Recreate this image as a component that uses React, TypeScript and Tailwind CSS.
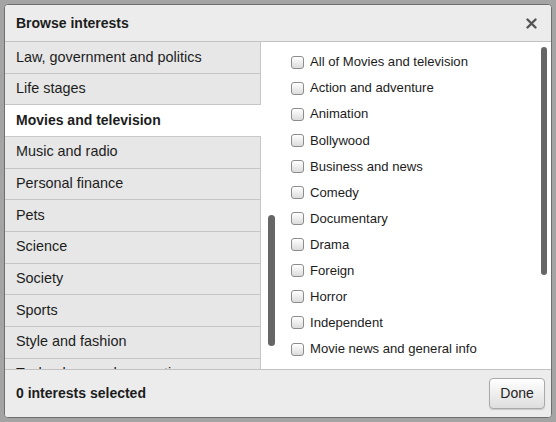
const categories = [
  "Law, government and politics",
  "Life stages",
  "Movies and television",
  "Music and radio",
  "Personal finance",
  "Pets",
  "Science",
  "Society",
  "Sports",
  "Style and fashion",
  "Technology and computing",
];

const subcategories = [
  "All of Movies and television",
  "Action and adventure",
  "Animation",
  "Bollywood",
  "Business and news",
  "Comedy",
  "Documentary",
  "Drama",
  "Foreign",
  "Horror",
  "Independent",
  "Movie news and general info",
  "Reality TV",
];

const selected = "Movies and television";

function CloseIcon() {
  return (
    <svg width="11" height="11" viewBox="0 0 11 11">
      <path d="M1.5 1.5 L9.5 9.5 M9.5 1.5 L1.5 9.5" stroke="#555" strokeWidth="2.4" strokeLinecap="round" />
    </svg>
  );
}

function Checkbox() {
  return (
    <span className="w-[13px] h-[13px] shrink-0 rounded-[3px] border border-[#8c8c8c] bg-gradient-to-b from-white to-[#dcdcdc] shadow-[inset_0_1px_0_#fff]" />
  );
}

export default function App() {
  return (
    <div
      className="w-[556px] h-[422px] bg-[#a4a4a4] p-[4px] text-[#1c1c1c]"
      style={{ fontFamily: '"Liberation Sans", Arial, sans-serif' }}
    >
      <div className="h-full flex flex-col rounded-[4px] border border-[#6e6e6e] bg-white overflow-hidden">
        {/* header */}
        <div className="h-[37px] shrink-0 flex items-center justify-between pl-[11px] pr-[14px] bg-[#ececec] border-b border-[#c2c2c2]">
          <span className="text-[14px] font-bold">Browse interests</span>
          <CloseIcon />
        </div>

        {/* body */}
        <div className="flex-1 flex min-h-0">
          <div className="relative w-[273px] shrink-0 overflow-hidden">
            <div className="w-[256px] flex flex-col">
              {categories.map((c) =>
                c === selected ? (
                  <div
                    key={c}
                    className="h-[31.67px] shrink-0 flex items-center pl-[11px] bg-white border-b border-[#c9c9c9] text-[14px] font-bold"
                  >
                    {c}
                  </div>
                ) : (
                  <div
                    key={c}
                    className="h-[31.67px] shrink-0 flex items-center pl-[11px] bg-[#e7e7e7] border-b border-r border-[#c6c6c6] text-[14.4px]"
                  >
                    {c}
                  </div>
                )
              )}
            </div>
            <div className="absolute left-[263px] top-[173px] w-[7px] h-[131px] rounded-full bg-[#666]" />
          </div>

          <div className="relative flex-1 overflow-hidden">
            <div className="flex flex-col pt-[7px] pl-[13px]">
              {subcategories.map((s) => (
                <div key={s} className="h-[26.1px] shrink-0 flex items-center gap-[6px] text-[13.1px]">
                  <Checkbox />
                  <span>{s}</span>
                </div>
              ))}
            </div>
            <div className="absolute right-[4px] top-[5px] w-[6px] h-[228px] rounded-full bg-[#666]" />
          </div>
        </div>

        {/* footer */}
        <div className="h-[48px] shrink-0 flex items-center justify-between pl-[11px] pr-[6px] bg-[#ececec] border-t border-[#c2c2c2]">
          <span className="text-[14px] font-bold">0 interests selected</span>
          <button className="w-[56px] h-[31px] rounded-[4px] border border-[#a9a9a9] bg-gradient-to-b from-white to-[#dedede] shadow-[0_1px_1px_rgba(0,0,0,0.15)] text-[14px] text-[#222]">
            Done
          </button>
        </div>
      </div>
    </div>
  );
}
